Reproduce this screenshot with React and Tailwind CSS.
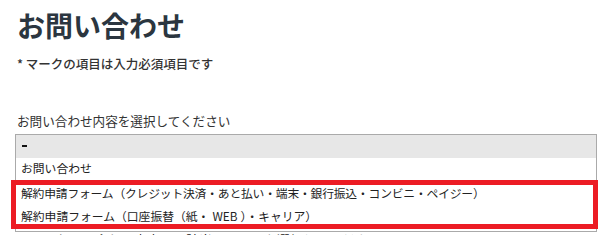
export default function App() {
  const font = { fontFamily: '"Noto Sans CJK JP", "Noto Sans", sans-serif' };
  return (
    <div className="relative w-[603px] h-[235px] overflow-hidden bg-white text-[#333]" style={font}>
      <div className="px-[17px] pt-[4px]">
        <h1 className="text-[28px] leading-[42px] font-bold text-[#2b3640]">お問い合わせ</h1>
        <p className="mt-[9px] text-[12.5px] leading-[18px] font-medium text-[#333]">* マークの項目は入力必須項目です</p>
        <p className="mt-[39px] text-[12.6px] leading-[18px] text-[#333]">お問い合わせ内容を選択してください</p>
        <div className="mt-[4px] h-[24px] border border-[#aaa]" />
        <p className="mt-[73px] text-[13px] leading-[18px] text-[#222]">以下のお問い合わせ内容から該当する項目を選択してください。</p>
      </div>
      <div className="absolute left-[15px] top-[134px] w-[582px] border border-[#aaa] bg-white pb-[4px] text-[11.8px] text-[#222]">
        <div className="h-[23px] flex items-center pl-[6px] pb-[2px] bg-[#e7e7e7]">
          <span className="block w-[5px] h-[2px] bg-[#111]" />
        </div>
        <div className="h-[23px] flex items-center pl-[5px] pb-[3px]">お問い合わせ</div>
        <div className="h-[23px] flex items-center pl-[5px] tracking-[-0.2px]">解約申請フォーム（クレジット決済・あと払い・端末・銀行振込・コンビニ・ペイジー）</div>
        <div className="h-[23px] flex items-center pl-[5px]">解約申請フォーム（口座振替（紙・<span className="px-[3px]">WEB</span>）・キャリア）</div>
      </div>
      <div className="absolute left-[11px] top-[180px] w-[587px] h-[49px] border-[5px] border-[#ec1c24]" />
    </div>
  );
}
